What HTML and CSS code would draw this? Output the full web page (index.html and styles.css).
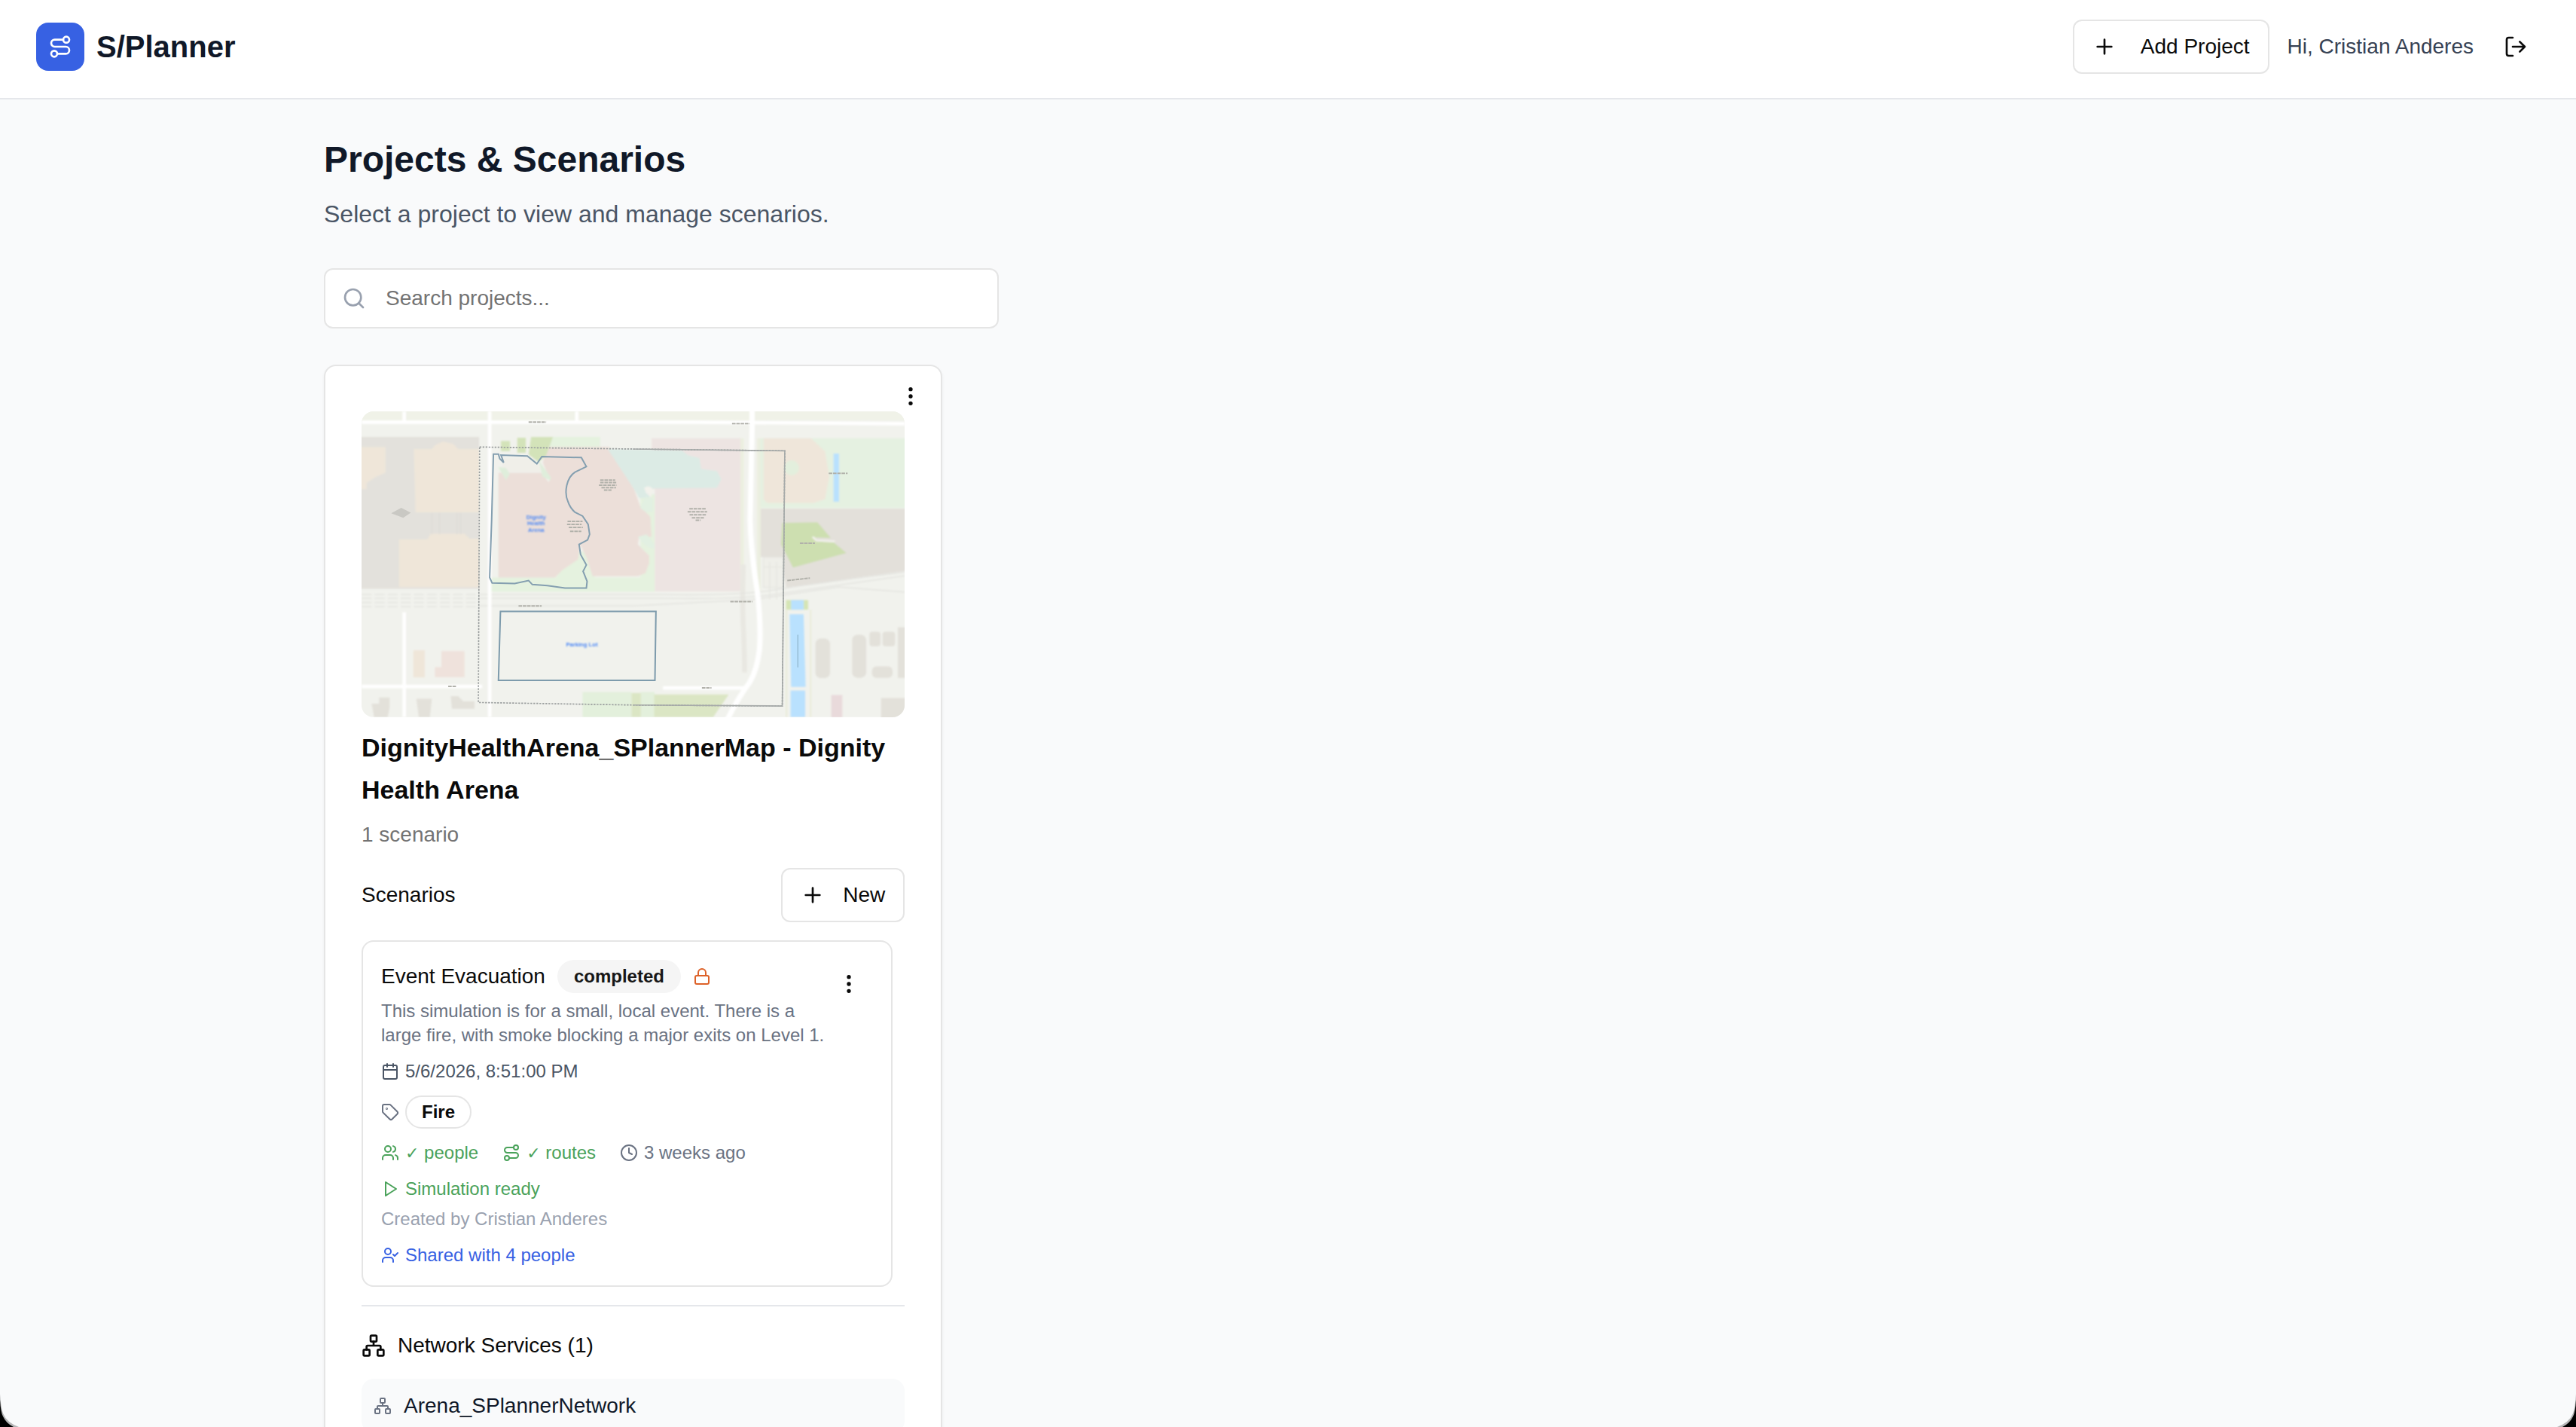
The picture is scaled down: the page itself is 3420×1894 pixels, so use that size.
FILE: index.html
```html
<!DOCTYPE html>
<html lang="en">
<head>
<meta charset="utf-8">
<meta name="viewport" content="width=device-width, initial-scale=1">
<title>S/Planner</title>
<link rel="stylesheet" href="styles.css">
</head>
<body>
<svg class="sprite" aria-hidden="true">
  <symbol id="route" viewBox="0 0 24 24"><circle cx="6" cy="19" r="3"/><path d="M9 19h8.500a3.500 3.500 0 0 0 0-7h-11a3.500 3.500 0 0 1 0-7H15"/><circle cx="18" cy="5" r="3"/></symbol>
  <symbol id="plus" viewBox="0 0 24 24"><path d="M5 12h14M12 5v14"/></symbol>
  <symbol id="logout" viewBox="0 0 24 24"><path d="m16 17 5-5-5-5M21 12H9M9 21H5a2 2 0 0 1-2-2V5a2 2 0 0 1 2-2h4"/></symbol>
  <symbol id="search" viewBox="0 0 24 24"><circle cx="11" cy="11" r="8"/><path d="m21 21-4.340-4.340"/></symbol>
  <symbol id="more" viewBox="0 0 24 24"><circle cx="12" cy="12" r="1"/><circle cx="12" cy="5" r="1"/><circle cx="12" cy="19" r="1"/></symbol>
  <symbol id="lock" viewBox="0 0 24 24"><rect width="18" height="11" x="3" y="11" rx="2"/><path d="M7 11V7a5 5 0 0 1 10 0v4"/></symbol>
  <symbol id="calendar" viewBox="0 0 24 24"><path d="M8 2v4M16 2v4M3 10h18"/><rect width="18" height="18" x="3" y="4" rx="2"/></symbol>
  <symbol id="tag" viewBox="0 0 24 24"><path d="M12.586 2.586A2 2 0 0 0 11.172 2H4a2 2 0 0 0-2 2v7.172a2 2 0 0 0 .586 1.414l8.704 8.704a2.426 2.426 0 0 0 3.420 0l6.580-6.580a2.426 2.426 0 0 0 0-3.420z"/><circle cx="7.500" cy="7.500" r=".5"/></symbol>
  <symbol id="users" viewBox="0 0 24 24"><path d="M16 21v-2a4 4 0 0 0-4-4H6a4 4 0 0 0-4 4v2M22 21v-2a4 4 0 0 0-3-3.870M16 3.130a4 4 0 0 1 0 7.750"/><circle cx="9" cy="7" r="4"/></symbol>
  <symbol id="clock" viewBox="0 0 24 24"><circle cx="12" cy="12" r="10"/><path d="M12 6v6l4 2"/></symbol>
  <symbol id="play" viewBox="0 0 24 24"><path d="M6 3l14 9-14 9z"/></symbol>
  <symbol id="usercheck" viewBox="0 0 24 24"><path d="m16 11 2 2 4-4M16 21v-2a4 4 0 0 0-4-4H6a4 4 0 0 0-4 4v2"/><circle cx="9" cy="7" r="4"/></symbol>
  <symbol id="network" viewBox="0 0 24 24"><rect x="16" y="16" width="6" height="6" rx="1"/><rect x="2" y="16" width="6" height="6" rx="1"/><rect x="9" y="2" width="6" height="6" rx="1"/><path d="M5 16v-3a1 1 0 0 1 1-1h12a1 1 0 0 1 1 1v3M12 12V8"/></symbol>
</svg>

<div class="app">
  <header class="topbar">
    <div class="brand">
      <span class="brand-mark"><svg class="icon"><use href="#route"/></svg></span>
      <span class="brand-name">S/Planner</span>
    </div>
    <div class="topbar-actions">
      <button type="button" class="btn btn-wide"><svg class="icon"><use href="#plus"/></svg>Add Project</button>
      <span class="greeting">Hi, Cristian Anderes</span>
      <button type="button" class="icon-btn" aria-label="Log out"><svg class="icon"><use href="#logout"/></svg></button>
    </div>
  </header>

  <main class="page">
    <div class="container">
      <div class="intro">
        <h1>Projects &amp; Scenarios</h1>
        <p>Select a project to view and manage scenarios.</p>
      </div>

      <div class="search">
        <svg class="icon search-icon"><use href="#search"/></svg>
        <input type="text" class="search-input" placeholder="Search projects..." aria-label="Search projects">
      </div>

      <div class="project-grid">
        <article class="card">
          <button type="button" class="icon-btn card-menu" aria-label="Project menu"><svg class="icon"><use href="#more"/></svg></button>

          <svg class="map" viewBox="0 0 2163 1218" preserveAspectRatio="none" role="img" aria-label="Dignity Health Arena site map">
            <defs><filter id="soft"><feGaussianBlur stdDeviation="3"/></filter><filter id="softer"><feGaussianBlur stdDeviation="2"/></filter></defs>
            <rect width="2163" height="1218" fill="#f1f2ed"/>
            <g filter="url(#soft)">
              <rect x="-20" y="-20" width="2203" height="56" fill="#f0f2e8"/>
              <path d="M-20 102H468V707H-20z" fill="#e3e1dc"/>
              <path d="M1588 387H2190V632L1690 702L1672 580H1588z" fill="#e3e0da"/>
              <path d="M-20 142H95V245L55 262L20 285V310H-20z" fill="#efe6d9"/>
              <path d="M208 150H280L292 135L325 120L365 130L385 150H468V402H215z" fill="#efe6d9"/>
              <path d="M150 510H262L275 488H410L430 507H468V700H150z" fill="#efe6d9"/>
              <path d="M280 405v85M310 405v85M380 405v85M395 405v85" stroke="#dbdad5" stroke-width="3"/>
              <path d="M515 662H1168V718H515z M750 102H950V142H740z M1110 330H1168V718H1110z M850 560H930V680H760z M545 225l30 50 20-20z" fill="#e5f2df"/>
              <path d="M545 245H715L745 282L750 270L722 205L735 142H985L1085 310L1110 380L1150 420L1155 500H1105L1100 530L1145 575V605L1130 645L1100 657H920L895 580L870 530L862 590L800 632L770 662H545z" fill="#ecdfd9"/>
              <path d="M560 185H690L715 240H560z" fill="#f0efe9"/>
              <path d="M545 222l30 53 15-25-15-25z M705 195l50 70-5 10-30-15z" fill="#dfeedb"/>
              <path d="M675 102H762L735 175L705 202L665 172z M555 118h36v40h-36z M620 105h34v60h-34z" fill="#d3e3b9"/>
              <path d="M1155 107H1510V717H1168V310H1155z" fill="#ede4e2"/>
              <path d="M980 150L1275 155L1300 175L1345 185L1352 230L1415 238L1432 270L1415 305L1150 308L1145 345H1105L1085 310z" fill="#dcebe5"/>
              <path d="M1110 385L1130 340L1160 345V400L1130 400z M1100 500l35-10 30 40v20l-35-15z" fill="#e2f0e2"/>
              <path d="M1125 305q20-15 35 5l-8 32-20-18z" fill="#f3f2ec"/>
              <path d="M1515 107V717M1582 107V717" stroke="#ecefe0" stroke-width="14"/>
              <path d="M1520 610q-5 150 0 250t5 180" stroke="#e9e8e2" stroke-width="20" fill="none"/>
              <path d="M1588 107H2190V385H1588z" fill="#e5f1e1"/>
              <path d="M1600 107H1790L1845 160L1862 260L1845 350L1800 365H1615L1600 350z" fill="#efe6da"/>
              <circle cx="1712" cy="225" r="30" fill="#e3efdd"/>
              <path d="M1675 444L1815 442L1868 504L1800 502L1810 518L1880 522L1930 564L1718 622L1670 530z" fill="#cddfb0"/>
              <path d="M1796 500l14 14 74 4" stroke="#f0f0ea" stroke-width="8" fill="none"/>
              <g stroke="#e2e2de" stroke-width="4" fill="none">
                <path d="M0 730H470M0 745H470M0 762H470M0 778H470" stroke-dasharray="40 12"/>
                <path d="M470 730H1200Q1500 735 1640 712T2163 640M470 745H1200Q1500 750 1640 730T2163 655M470 775L1080 775L1560 750L1900 700L2163 720"/>
              </g>
              <path d="M1600 582h80v120h-80zM1600 620h80M1625 600v150M1652 600v150" stroke="#e6e6e1" stroke-width="4" fill="#efefe9"/>
              <path d="M1690 752h88v38h-88z" fill="#d5e5b5"/>
              <path d="M1692 790V1218M1788 790V1218" stroke="#e8ead4" stroke-width="5"/>
              <path d="M1710 752h50v38h-50zM1704 808h56l8 290h-58zM1708 1112h58v106h-58z" fill="#b9e1fe"/>
              <rect x="1879" y="168" width="22" height="192" fill="#b9e1fe"/>
              <g fill="#e3e1da">
                <rect x="1807" y="905" width="58" height="158" rx="22"/><rect x="1953" y="890" width="56" height="172" rx="22"/>
                <rect x="2022" y="878" width="44" height="58" rx="12"/><rect x="2074" y="878" width="50" height="58" rx="12"/>
                <rect x="2032" y="1016" width="82" height="46" rx="18"/><rect x="2135" y="860" width="50" height="202"/><rect x="2068" y="1142" width="120" height="100"/>
                <path d="M40 1165h30v-25h42v40l-8 38H50z M218 1145h62l-8 73h-44z M355 1135h30l20 20h45v30h-90z"/>
              </g>
              <rect x="1870" y="1130" width="44" height="90" fill="#e9dadb"/>
              <rect x="206" y="952" width="46" height="108" fill="#efe6d9"/>
              <path d="M318 955h92v104H292v-40h26z" fill="#efe2dc"/>
              <path d="M880 1118H1075V1218H880z M1112 1118h55v100h-55z" fill="#e3f0dc"/>
              <path d="M1075 1122h37v96h-37z M1165 1128H1462L1400 1218H1165z" fill="#dbe6c4"/>
              <g stroke="#fff" stroke-width="14" fill="none">
                <path d="M0 43H1300L2163 49M510 0V1218M170 0V42M857 0V42M170 800V1218M0 1096H480M1200 1102H1525"/>
                <path d="M1555 -10V60L1547 432Q1550 560 1575 712Q1592 860 1584 950Q1575 1030 1545 1080Q1500 1140 1455 1230" stroke-width="21"/>
              </g>
            </g>
            <g filter="url(#softer)" fill="none">
              <path d="M470 142L1080 150L1685 157L1675 1174L1080 1170L465 1160z" stroke="#999d9d" stroke-width="5" stroke-dasharray="7 5"/>
              <path d="M1080 150L1685 157L1675 1174L1080 1170" stroke="#a6aaa9" stroke-width="5"/>
              <path d="M525 170H545L550 188L566 204L555 174L660 178L698 209L718 180L875 184L895 220L850 242Q825 258 817 295T822 360Q830 385 850 402L880 417L902 450L908 490L900 512L866 530L872 570L895 612L882 637L898 677L895 704H810L740 694L680 690L665 674L610 686L520 684L510 662L518 432z" stroke="#849fb0" stroke-width="6"/>
              <path d="M553 797H1172L1168 1072H545z" stroke="#7d9bac" stroke-width="6"/>
              <g stroke="#b1b1aa" stroke-width="6" stroke-dasharray="14 3">
                <path d="M665 43h70M1475 49h70M625 775h92M1468 758h88M345 1096h32M1355 1102h38M1860 247h75M1695 674l90-10M1745 525h60"/>
                <path d="M950 274h60M950 284h64M945 294h70M955 304h58M965 314h30M820 438h60M818 450h58M825 462h56M830 478h45M1305 388h66M1298 400h78M1306 412h68M1315 424h50M1330 434h20"/>
              </g>
              <path d="M118 406l40-22 38 20-30 20z" fill="#c9c8c3"/>
              <path d="M1737 890V1020" stroke="#93b8d0" stroke-width="4"/>
            </g>
            <g class="map-label" filter="url(#soft)">
              <text x="695" y="429">Dignity</text>
              <text x="695" y="454">Health</text>
              <text x="695" y="479">Arena</text>
              <text x="877" y="938">Parking Lot</text>
            </g>
          </svg>

          <h2 class="card-title">DignityHealthArena_SPlannerMap - Dignity Health Arena</h2>
          <p class="card-count">1 scenario</p>

          <div class="section-head">
            <h3>Scenarios</h3>
            <button type="button" class="btn"><svg class="icon"><use href="#plus"/></svg>New</button>
          </div>

          <div class="scenario-list">
            <section class="scenario">
              <div class="scenario-body">
                <div class="stack">
                  <div class="scenario-head">
                    <h4>Event Evacuation</h4>
                    <span class="badge badge-muted">completed</span>
                    <svg class="icon icon-sm lock"><use href="#lock"/></svg>
                  </div>
                  <p class="muted">This simulation is for a small, local event. There is a large fire, with smoke blocking a major exits on Level 1.</p>
                </div>
                <div class="meta date"><svg class="icon icon-sm"><use href="#calendar"/></svg>5/6/2026, 8:51:00 PM</div>
                <div class="meta muted"><svg class="icon icon-sm"><use href="#tag"/></svg><span class="badge badge-outline">Fire</span></div>
                <div class="meta-row">
                  <div class="meta ok"><svg class="icon icon-sm"><use href="#users"/></svg><span><span class="tick">✓</span> people</span></div>
                  <div class="meta ok"><svg class="icon icon-sm"><use href="#route"/></svg><span><span class="tick">✓</span> routes</span></div>
                  <div class="meta muted"><svg class="icon icon-sm"><use href="#clock"/></svg>3 weeks ago</div>
                </div>
                <div class="stack">
                  <div class="meta ok"><svg class="icon icon-sm"><use href="#play"/></svg>Simulation ready</div>
                  <p class="faint">Created by Cristian Anderes</p>
                </div>
                <div class="meta shared"><svg class="icon icon-sm"><use href="#usercheck"/></svg>Shared with 4 people</div>
              </div>
              <button type="button" class="icon-btn" aria-label="Scenario menu"><svg class="icon"><use href="#more"/></svg></button>
            </section>
          </div>

          <section class="services">
            <h3 class="services-head"><svg class="icon"><use href="#network"/></svg>Network Services (1)</h3>
            <div class="service"><svg class="icon icon-sm"><use href="#network"/></svg>Arena_SPlannerNetwork</div>
          </section>
        </article>
      </div>
    </div>
  </main>
</div>

<svg class="corner corner-left" viewBox="0 0 26 52" aria-hidden="true"><path d="M0 8Q1 26 4 34Q9 46 25 52H0z" fill="#b5b5b6"/><path d="M0 16Q1 33 4 38Q8 47 18 52H0z" fill="#000"/></svg>
<svg class="corner corner-right" viewBox="0 0 26 52" aria-hidden="true"><path d="M26 8Q25 26 22 34Q17 46 1 52H26z" fill="#b5b5b6"/><path d="M26 16Q25 33 22 38Q18 47 8 52H26z" fill="#000"/></svg>
</body>
</html>
```
FILE: styles.css
```css
* {
  box-sizing: border-box;
}

body {
  margin: 0;
  font-family: "Liberation Sans", Arial, Helvetica, sans-serif;
  font-size: 28px;
  line-height: 40px;
  color: #0a0a0a;
  background: #f9fafb;
}

h1, h2, h3, h4, p {
  margin: 0;
  font-size: inherit;
  font-weight: 400;
}

button, input {
  font: inherit;
  color: inherit;
}

.sprite {
  display: none;
}

.icon {
  flex: none;
  width: 32px;
  height: 32px;
  fill: none;
  stroke: currentColor;
  stroke-width: 2;
  stroke-linecap: round;
  stroke-linejoin: round;
}

.icon-sm {
  width: 24px;
  height: 24px;
}

.app {
  height: 100vh;
  overflow: hidden;
}

/* Top bar */

.topbar {
  display: flex;
  align-items: center;
  justify-content: space-between;
  padding: 26px 48px 32px;
  background: #fff;
  border-bottom: 2px solid #e5e7eb;
}

.brand {
  display: flex;
  align-items: center;
  gap: 16px;
}

.brand-mark {
  display: flex;
  align-items: center;
  justify-content: center;
  width: 64px;
  height: 64px;
  border-radius: 16px;
  color: #fff;
  background: #3761e3;
}

.brand-name {
  font-size: 40px;
  font-weight: 700;
  color: #101828;
}

.topbar-actions {
  display: flex;
  align-items: center;
  gap: 24px;
}

.greeting {
  color: #364153;
}

.btn {
  display: flex;
  align-items: center;
  gap: 24px;
  padding: 14px 24px;
  background: #fff;
  border: 2px solid #e5e5e5;
  border-radius: 12px;
}

.btn-wide {
  gap: 32px;
}

.icon-btn {
  display: flex;
  flex: none;
  align-items: center;
  justify-content: center;
  width: 64px;
  height: 64px;
  padding: 0;
  background: none;
  border: 0;
}

/* Page */

.page {
  padding: 48px;
}

.container {
  display: flex;
  flex-direction: column;
  gap: 48px;
  max-width: 2560px;
  margin: 0 auto;
}

.intro {
  display: flex;
  flex-direction: column;
  gap: 16px;
}

.intro h1 {
  font-size: 48px;
  line-height: 64px;
  font-weight: 700;
  color: #101828;
}

.intro p {
  font-size: 32px;
  line-height: 48px;
  color: #4a5565;
}

.search {
  position: relative;
  max-width: 896px;
}

.search-icon {
  position: absolute;
  top: 24px;
  left: 24px;
  color: #99a1af;
}

.search-input {
  display: block;
  width: 100%;
  height: 80px;
  padding: 0 24px 0 80px;
  background: #fff;
  border: 2px solid #e5e5e5;
  border-radius: 12px;
}

.search-input::placeholder {
  color: #737373;
  opacity: 1;
}

.project-grid {
  display: grid;
  grid-template-columns: repeat(3, 1fr);
  gap: 48px;
}

/* Project card */

.card {
  position: relative;
  padding: 60px 48px 48px;
  background: #fff;
  border: 2px solid #e5e5e5;
  border-radius: 16px;
  box-shadow: 0 2px 4px rgba(0, 0, 0, 0.05);
}

.card-menu {
  position: absolute;
  top: 8px;
  right: 8px;
}

.map {
  display: block;
  width: 100%;
  aspect-ratio: 16 / 9;
  border-radius: 16px;
}

.map-label {
  font-size: 23px;
  font-weight: 700;
  text-anchor: middle;
  fill: #4a86f5;
}

.card-title {
  margin-top: 12px;
  font-size: 34px;
  line-height: 56px;
  font-weight: 700;
}

.card-count {
  margin-top: 12px;
  color: #737373;
}

.section-head {
  display: flex;
  align-items: center;
  justify-content: space-between;
  margin: 24px 0;
}

.scenario-list {
  padding-right: 16px;
}

.scenario {
  display: flex;
  align-items: flex-start;
  padding: 24px;
  border: 2px solid #e5e5e5;
  border-radius: 16px;
  font-size: 24px;
  line-height: 32px;
}

.scenario-body {
  display: flex;
  flex: 1;
  flex-direction: column;
  gap: 16px;
  min-width: 0;
}

.stack {
  display: flex;
  flex-direction: column;
  gap: 8px;
}

.scenario-head {
  display: flex;
  align-items: center;
  gap: 16px;
}

.scenario-head h4 {
  font-size: 28px;
  line-height: 40px;
}

.badge {
  padding: 4px 20px;
  border: 2px solid transparent;
  border-radius: 22px;
  font-weight: 700;
}

.badge-muted {
  color: #171717;
  background: #f5f5f5;
}

.badge-outline {
  color: #0a0a0a;
  border-color: #e5e5e5;
}

.meta {
  display: flex;
  align-items: center;
  gap: 8px;
}

.meta-row {
  display: flex;
  gap: 32px;
}

.tick {
  font-family: "DejaVu Sans", sans-serif;
  font-size: 22px;
  font-weight: 700;
  line-height: 24px;
}

.lock {
  color: #dd6128;
}

.date {
  color: #4a5565;
}

.muted {
  color: #6a7282;
}

.faint {
  color: #99a1af;
}

.ok {
  color: #4aa25a;
}

.shared {
  color: #3761e3;
}

/* Network services */

.services {
  display: flex;
  flex-direction: column;
  gap: 24px;
  margin-top: 24px;
  padding-top: 32px;
  border-top: 2px solid #e5e7eb;
}

.services-head {
  display: flex;
  align-items: center;
  gap: 16px;
}

.service {
  display: flex;
  align-items: center;
  gap: 16px;
  padding: 16px;
  border-radius: 16px;
  color: #101828;
  background: #f9fafb;
}

.service .icon {
  color: #6a7282;
}

/* Rounded lower corners of the window */

.corner {
  position: fixed;
  bottom: 0;
  width: 26px;
  height: 52px;
}

.corner-left {
  left: 0;
}

.corner-right {
  right: 0;
}
```
